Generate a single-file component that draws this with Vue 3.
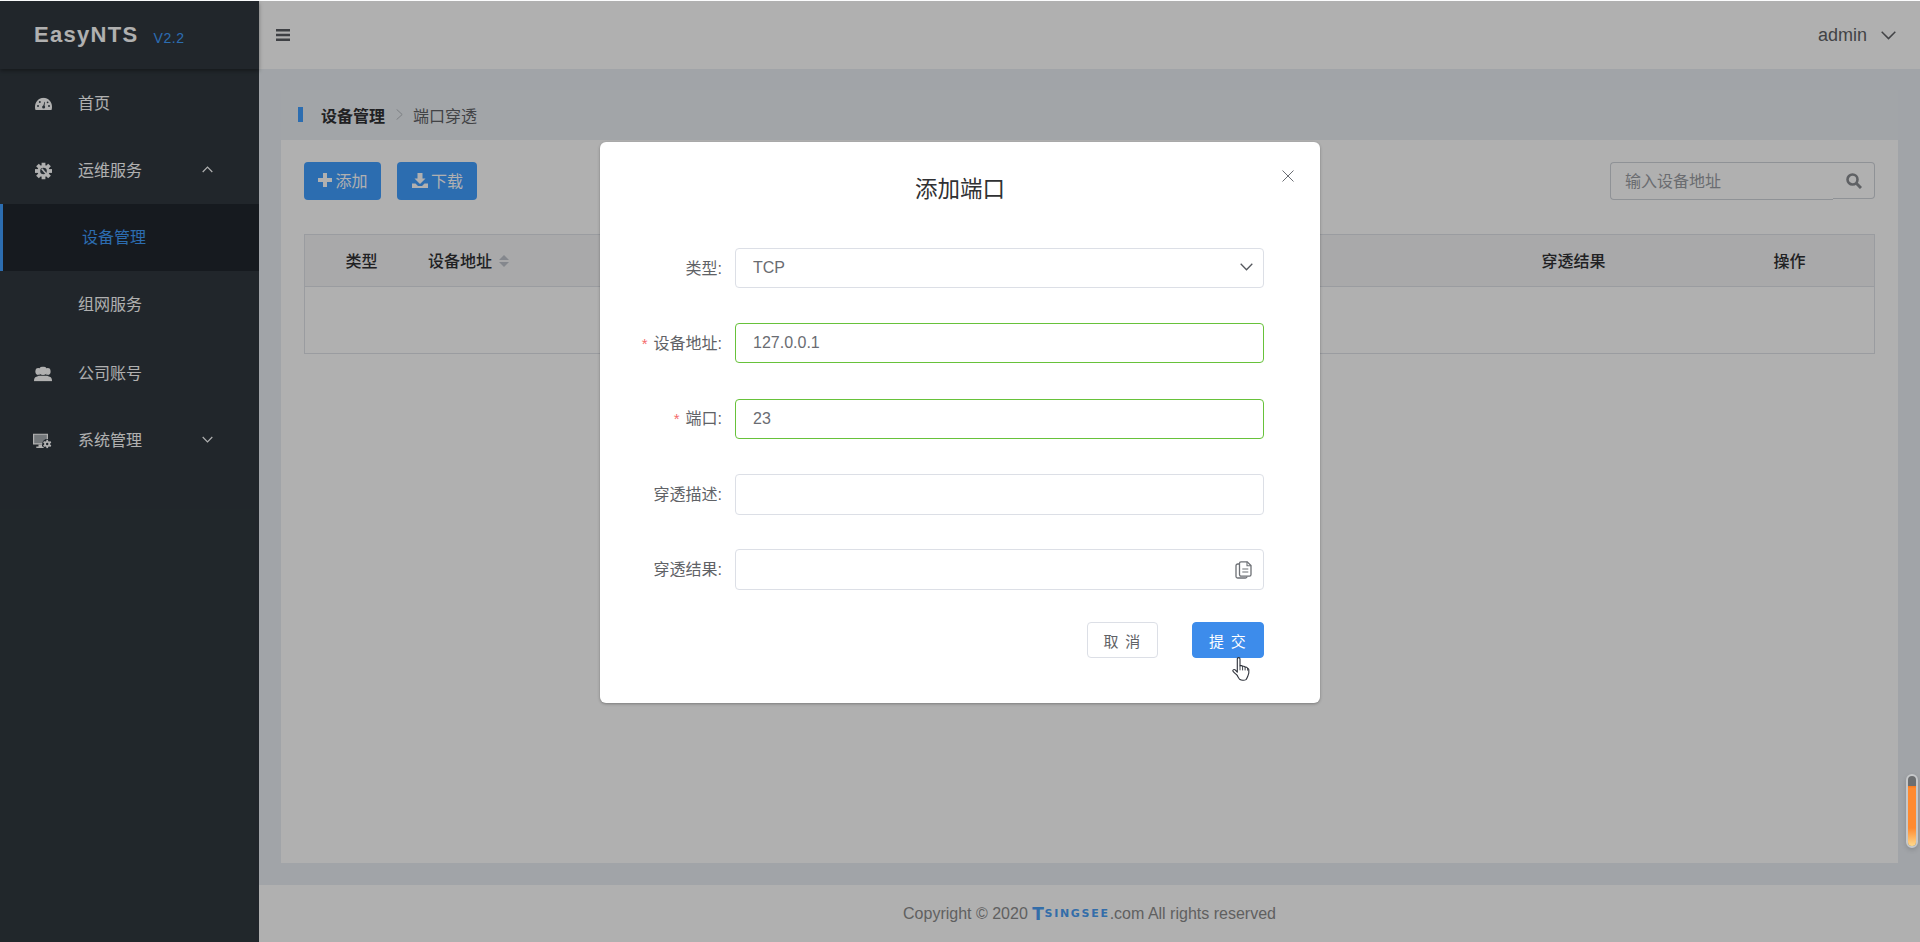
<script setup>
const gearTeeth = [0, 45, 90, 135, 180, 225, 270, 315]
const gearTeethSmall = [0, 60, 120, 180, 240, 300]
</script>

<template>
  <div class="page">
    <div class="topline"></div>
    <div class="shell">
      <aside class="sidebar">
        <div class="brand">
          <span class="brand-name">EasyNTS</span>
          <span class="brand-ver">V2.2</span>
        </div>
        <nav class="menu">
          <div class="menu-row">
            <svg class="menu-icon" viewBox="0 0 17 13" width="17" height="13">
              <path d="M.5 12.6C.1 11.5 0 10.500 0 9.300 0 4.200 3.800.2 8.500.2S17 4.200 17 9.300c0 1.200-.1 2.200-.5 3.300z" fill="#fff"/>
              <path d="M8.100 9 9.500 4.200 10 4.400 9.400 9.500z" fill="#3a444e"/>
              <circle cx="8.600" cy="9.600" r="1.500" fill="#3a444e"/>
              <circle cx="3" cy="8.500" r="1" fill="#3a444e"/>
              <circle cx="4.800" cy="4.600" r="1" fill="#3a444e"/>
              <circle cx="14" cy="8.500" r="1" fill="#3a444e"/>
              <circle cx="12.600" cy="4.800" r=".9" fill="#3a444e"/>
            </svg>
            <span class="menu-label">首页</span>
          </div>
          <div class="menu-row">
            <svg class="menu-icon" viewBox="0 0 17 17" width="17" height="17">
              <g fill="#fff">
                <rect v-for="a in gearTeeth" :key="a" x="6.600" y="0" width="3.800" height="4" :transform="`rotate(${a} 8.500 8.500)`"/>
                <circle cx="8.500" cy="8.500" r="6"/>
              </g>
              <circle cx="8.500" cy="8.500" r="3.300" fill="#3a444e"/>
              <path d="M6.800 6.200 12 12.200" stroke="#fff" stroke-width="1.600"/>
            </svg>
            <span class="menu-label">运维服务</span>
            <svg class="menu-caret" viewBox="0 0 11 7" width="11" height="7"><path d="M.7 6 5.500 1.200 10.300 6" fill="none" stroke="#fff" stroke-width="1.200"/></svg>
          </div>
          <div class="menu-row sub active">
            <span class="menu-label">设备管理</span>
          </div>
          <div class="menu-row sub plain">
            <span class="menu-label">组网服务</span>
          </div>
          <div class="menu-row gapped">
            <svg class="menu-icon wide" viewBox="0 0 18 15" width="18" height="15">
              <ellipse cx="4.300" cy="5" rx="2.900" ry="3.400" fill="#fff"/>
              <ellipse cx="13.700" cy="5" rx="2.900" ry="3.400" fill="#fff"/>
              <path d="M0 14.800c0-2.800.6-3.800 2.400-4.500l2.600-1h8l2.600 1c1.800.7 2.400 1.700 2.400 4.500z" fill="#fff"/>
              <ellipse cx="9" cy="4.300" rx="3.900" ry="4.300" fill="#fff"/>
              <path d="M5.400 7.800c-.5.500-1.100.9-1.800 1.100M12.600 7.800c.5.500 1.100.9 1.800 1.100" fill="none" stroke="#6c747c" stroke-width=".7"/>
            </svg>
            <span class="menu-label">公司账号</span>
          </div>
          <div class="menu-row">
            <svg class="menu-icon wide mon" viewBox="0 0 19 15" width="19" height="15">
              <path d="M0 0h15v11H0z" fill="#fff"/>
              <path d="M1.200 1.200h12.600v8.600H1.200z" fill="#a9aeb3"/>
              <path d="M5.500 11h3.500v2h2.200v1.500H3.300V13h2.200z" fill="#fff"/>
              <circle cx="14.200" cy="10.500" r="5" fill="#2e3740"/>
              <g fill="#fff">
                <rect v-for="a in gearTeethSmall" :key="a" x="13.300" y="6.300" width="1.800" height="2" :transform="`rotate(${a} 14.200 10.500)`"/>
                <circle cx="14.200" cy="10.500" r="3"/>
              </g>
              <circle cx="14.200" cy="10.500" r="1.200" fill="#2e3740"/>
            </svg>
            <span class="menu-label">系统管理</span>
            <svg class="menu-caret" viewBox="0 0 11 7" width="11" height="7"><path d="M.7 1 5.500 5.800 10.300 1" fill="none" stroke="#fff" stroke-width="1.200"/></svg>
          </div>
        </nav>
      </aside>

      <div class="right">
        <header class="topbar">
          <svg class="bars" viewBox="0 0 14 12" width="14" height="12">
            <path d="M0 0h14v2.400H0zM0 4.800h14v2.400H0zM0 9.600h14V12H0z" fill="#5a5e63"/>
          </svg>
          <div class="user">
            <span>admin</span>
            <svg viewBox="0 0 15 9" width="15" height="9"><path d="M.7 .8 7.500 7.600 14.300 .8" fill="none" stroke="#606266" stroke-width="1.500"/></svg>
          </div>
        </header>

        <main class="main">
          <div class="crumbs">
            <i class="crumb-bar"></i>
            <b class="crumb-a">设备管理</b>
            <svg class="crumb-sep" viewBox="0 0 7 11" width="7" height="11"><path d="M.6 .4 6.200 5.500 .6 10.600" fill="none" stroke="#b4b8be" stroke-width="1"/></svg>
            <span class="crumb-b">端口穿透</span>
          </div>
          <section class="panel">
            <div class="toolbar">
              <button class="btn">
                <svg viewBox="0 0 14 14" width="14" height="14"><path d="M5 0h4v5h5v4H9v5H5V9H0V5h5z" fill="#fff"/></svg>
                添加
              </button>
              <button class="btn btn-dl">
                <svg viewBox="0 0 16 15" width="16" height="15"><path d="M5.500 0h5v5.500h3L8 11 2.500 5.500h3zM0 10.500h3.500L6 13h4l2.500-2.500H16V15H0z" fill="#fff"/></svg>
                下载
              </button>
              <div class="search">
                <input class="search-input" placeholder="输入设备地址" />
                <div class="search-append">
                  <svg viewBox="0 0 16 16" width="16" height="16"><circle cx="6.500" cy="6.500" r="5" fill="none" stroke="#8a8d92" stroke-width="2.600"/><path d="M10.300 10.300 15 15" stroke="#8a8d92" stroke-width="3"/></svg>
                </div>
              </div>
            </div>
            <div class="table">
              <div class="thead">
                <div class="th c-type">类型</div>
                <div class="th c-addr">设备地址
                  <span class="sorter"><i class="up"></i><i class="down"></i></span>
                </div>
                <div class="th c-result">穿透结果</div>
                <div class="th c-op">操作</div>
              </div>
              <div class="tbody"></div>
            </div>
          </section>
        </main>

        <footer class="footer">
          Copyright © 2020 <span class="tsingsee"><span class="ts-t">T</span>SINGSEE</span>.com All rights reserved
        </footer>
      </div>
    </div>

    <div class="overlay"></div>

    <div class="dialog">
      <button class="close" aria-label="close">
        <svg viewBox="0 0 12 12" width="12" height="12"><path d="M.5 .5 11.500 11.500M11.500 .5 .5 11.500" stroke="#6a6d73" stroke-width="1"/></svg>
      </button>
      <h2 class="dialog-title">添加端口</h2>
      <div class="form">
        <div class="form-row">
          <label class="form-label">类型:</label>
          <div class="field">
            <input class="field-input" value="TCP" />
            <svg class="select-arrow" viewBox="0 0 13 8" width="13" height="8"><path d="M.7 .8 6.500 6.800 12.300 .8" fill="none" stroke="#55585e" stroke-width="1.300"/></svg>
          </div>
        </div>
        <div class="form-row">
          <label class="form-label"><em>*</em>设备地址:</label>
          <div class="field ok"><input class="field-input" value="127.0.0.1" /></div>
        </div>
        <div class="form-row">
          <label class="form-label"><em>*</em>端口:</label>
          <div class="field ok"><input class="field-input" value="23" /></div>
        </div>
        <div class="form-row">
          <label class="form-label">穿透描述:</label>
          <div class="field tall"><input class="field-input" /></div>
        </div>
        <div class="form-row last">
          <label class="form-label">穿透结果:</label>
          <div class="field tall">
            <input class="field-input" />
            <svg class="copy-icon" viewBox="0 0 17 18" width="17" height="18">
              <path d="M4.500 3H2.800C1.700 3 1 3.700 1 4.800v10.700C1 16.500 1.700 17 2.600 17h7.800c.9 0 1.600-.5 1.600-1.500" fill="none" stroke="#6d7075" stroke-width="1.300"/>
              <path d="M4.500 2.300C4.500 1.400 5.200.8 6 .8h6.200L16 4.600v9c0 .9-.7 1.600-1.500 1.600H6c-.8 0-1.500-.7-1.500-1.600z" fill="#fff" stroke="#6d7075" stroke-width="1.300"/>
              <path d="M12 .8v3.900h4M7.300 8h6M7.300 11h6" fill="none" stroke="#6d7075" stroke-width="1.100"/>
            </svg>
          </div>
        </div>
      </div>
      <div class="actions">
        <button class="act act-cancel">取 消</button>
        <button class="act act-submit">提 交</button>
      </div>
    </div>

    <svg class="hand" viewBox="0 0 19 24" width="19" height="24">
      <path d="M5.300 1.900c0-1.700 2.700-1.700 2.700 0v6.800l1.100-.1c.9 0 1.400.4 1.500.9.400-.4 2.200-.5 2.500.8.600-.4 2.400-.2 2.500 1.200 0 0 1-.1 1.200 1 .3 2.100-.1 5-1 6.700-.5 1.100-1 2.700-1.800 3.400-1.500.9-4.800.7-6 0-1.100-.8-1.900-2.800-3.200-4.700C3.100 16.400 1 14.900.8 13.900c-.2-1.300 1.500-1.700 2.400-1l2.100 2.200z" fill="#fff" stroke="#2b2f38" stroke-width="1.100" stroke-linejoin="round"/>
      <path d="M8 8.700v4.600M10.600 9.500v3.900M13.100 10.400v3M15.600 11.600v2" fill="none" stroke="#2b2f38" stroke-width=".9"/>
    </svg>

    <div class="widget"><div class="widget-fill"></div></div>
  </div>
</template>

<style scoped>
.page {
  position: relative;
  height: 942px;
  overflow: hidden;
  display: flex;
  flex-direction: column;
  font-family: "Liberation Sans", "Noto Sans CJK SC", sans-serif;
  font-size: 16px;
  color: #606266;
  background: #e9eef3;
}
.topline {
  height: 1px;
  flex: none;
  background: #fff;
  position: relative;
  z-index: 5;
  opacity: .8;
}
.shell {
  flex: 1;
  min-height: 0;
  display: flex;
}
.sidebar {
  width: 259px;
  flex: none;
  background: #30383f;
  color: #fff;
}
.brand {
  height: 68px;
  box-sizing: border-box;
  padding-left: 34px;
  display: flex;
  align-items: center;
  background: #30383f;
  box-shadow: 0 2px 4px rgba(0, 0, 0, .35);
  position: relative;
}
.brand-name {
  font-size: 22px;
  font-weight: 700;
  letter-spacing: 1.3px;
}
.brand-ver {
  margin-left: 15px;
  margin-top: 6px;
  font-size: 14px;
  letter-spacing: .6px;
  color: #409eff;
}
.menu {
  padding-top: 1px;
}
.menu-row {
  height: 67px;
  box-sizing: border-box;
  display: flex;
  align-items: center;
  padding-left: 78px;
  padding-bottom: 3px;
  position: relative;
}
.menu-row.gapped {
  margin-top: 2px;
}
.menu-icon {
  position: absolute;
  left: 35px;
  top: 50%;
  transform: translateY(-50%);
}
.menu-icon.wide {
  left: 34px;
}
.menu-icon.mon {
  left: 33px;
}
.menu-caret {
  position: absolute;
  left: 202px;
  top: 29px;
}
.menu-row.sub.active {
  background: #21272d;
  border-left: 3px solid #409eff;
  padding-left: 79px;
  color: #409eff;
}
.right {
  flex: 1;
  min-width: 0;
  display: flex;
  flex-direction: column;
}
.topbar {
  height: 68px;
  flex: none;
  background: #fff;
  box-sizing: border-box;
  padding: 0 24px 0 17px;
  display: flex;
  align-items: center;
  justify-content: space-between;
}
.user {
  display: flex;
  align-items: center;
  gap: 14px;
  font-size: 18px;
  color: #606266;
}
.main {
  flex: 1;
  min-height: 0;
  padding: 21px 22px 22px;
  display: flex;
  flex-direction: column;
}
.crumbs {
  height: 50px;
  flex: none;
  display: flex;
  align-items: center;
  padding-left: 17px;
  padding-bottom: 1px;
  box-sizing: border-box;
  background: #ebeff3;
}
.crumb-bar {
  width: 5px;
  height: 15px;
  background: #409eff;
  margin-right: 18px;
}
.crumb-a {
  font-weight: 700;
  color: #303133;
}
.crumb-sep {
  margin: 0 10px 0 11px;
}
.crumb-b {
  color: #606266;
}
.panel {
  flex: 1;
  min-height: 0;
  background: #fff;
  padding: 22px 23px;
}
.toolbar {
  display: flex;
  align-items: flex-start;
}
.btn {
  height: 38px;
  width: 77px;
  box-sizing: border-box;
  border: 0;
  border-radius: 4px;
  background: #409eff;
  color: #fff;
  font: inherit;
  display: flex;
  align-items: center;
  justify-content: center;
  gap: 3px;
  padding: 0 0 2px 1px;
}
.btn-dl {
  width: 80px;
  margin-left: 16px;
}
.search {
  margin-left: auto;
  display: flex;
  align-items: flex-start;
}
.search-input {
  width: 223px;
  height: 38px;
  box-sizing: border-box;
  border: 1px solid #d0d4da;
  border-right: 0;
  border-radius: 4px 0 0 4px;
  padding: 1px 14px 0;
  outline: 0;
  font: inherit;
  color: #606266;
  background: #fff;
}
.search-input::placeholder {
  color: #9a9da3;
  opacity: 1;
}
.search-append {
  width: 42px;
  height: 37px;
  box-sizing: border-box;
  border: 1px solid #d0d4da;
  border-left: 0;
  border-radius: 0 4px 4px 0;
  display: flex;
  align-items: center;
  justify-content: center;
}
.table {
  margin-top: 34px;
  border: 1px solid #dfe2e8;
}
.thead {
  height: 52px;
  box-sizing: border-box;
  display: flex;
  align-items: center;
  background: #f5f5f7;
  border-bottom: 1px solid #dfe2e8;
  color: #303133;
  font-weight: 500;
  padding-bottom: 2px;
}
.th {
  box-sizing: border-box;
}
.c-type {
  width: 113px;
  text-align: center;
}
.c-addr {
  flex: 1;
  padding-left: 10px;
  display: flex;
  align-items: center;
  gap: 7px;
}
.c-result {
  width: 262px;
  text-align: center;
  padding-right: 1px;
}
.c-op {
  width: 169px;
  text-align: center;
}
.sorter {
  display: inline-flex;
  flex-direction: column;
  gap: 2px;
  padding-top: 2px;
}
.sorter i {
  display: block;
  width: 0;
  height: 0;
  border-left: 5.500px solid transparent;
  border-right: 5.500px solid transparent;
}
.sorter .up {
  border-bottom: 5.500px solid #c0c4cc;
}
.sorter .down {
  border-top: 5.500px solid #c0c4cc;
}
.tbody {
  height: 66px;
}
.footer {
  height: 57px;
  flex: none;
  background: #fff;
  display: flex;
  align-items: center;
  justify-content: center;
  white-space: pre;
  color: #8c8c8c;
}
.tsingsee {
  font-family: "DejaVu Sans", sans-serif;
  font-weight: 700;
  font-size: 11px;
  letter-spacing: 1.7px;
  color: #4a9ef5;
  display: inline-flex;
  align-items: flex-end;
  line-height: 12px;
}
.ts-t {
  font-size: 17px;
  line-height: 12px;
  margin-right: -1px;
}
.overlay {
  position: absolute;
  inset: 1px 0 0;
  background: rgba(0, 0, 0, .31);
}
.dialog {
  position: absolute;
  left: 600px;
  top: 142px;
  width: 720px;
  height: 561px;
  box-sizing: border-box;
  background: #fff;
  border-radius: 6px;
  box-shadow: 0 1px 3px rgba(0, 0, 0, .3);
  padding: 30px 56px 0 0;
}
.close {
  position: absolute;
  right: 26px;
  top: 28px;
  width: 12px;
  height: 12px;
  border: 0;
  padding: 0;
  background: none;
  display: flex;
}
.dialog-title {
  margin: 1px 0 41px 56px;
  font-size: 22.500px;
  line-height: 34px;
  font-weight: 400;
  color: #303133;
  text-align: center;
}
.form {
  display: flex;
  flex-direction: column;
  gap: 35.250px;
}
.form-row {
  display: flex;
  align-items: center;
}
.form-row.last {
  margin-top: -.75px;
}
.form-label {
  width: 122px;
  flex: none;
  margin-right: 13px;
  padding-bottom: 3px;
  text-align: right;
  color: #606266;
  font-size: 16px;
}
.form-label em {
  font-style: normal;
  color: #f56c6c;
  font-size: 15px;
  margin-right: 6px;
}
.field {
  flex: 1;
  height: 40px;
  box-sizing: border-box;
  border: 1px solid #dcdfe6;
  border-radius: 4px;
  display: flex;
  align-items: center;
  padding: 0 16px 0 17px;
}
.field.tall {
  height: 41px;
}
.field.ok {
  border-color: #67c23a;
}
.field-input {
  flex: 1;
  min-width: 0;
  border: 0;
  outline: 0;
  padding: 0;
  background: none;
  font: inherit;
  color: #6a6c72;
}
.select-arrow {
  flex: none;
  margin-right: -6px;
  margin-top: -2px;
}
.copy-icon {
  flex: none;
  margin-right: -5px;
}
.actions {
  margin-top: 32px;
  display: flex;
  justify-content: flex-end;
  gap: 34px;
}
.act {
  height: 36px;
  width: 71px;
  box-sizing: border-box;
  border-radius: 4px;
  border: 1px solid #dcdfe6;
  background: #fff;
  color: #606266;
  font: inherit;
  font-size: 15px;
  letter-spacing: 1.200px;
  padding: 0;
}
.act-submit {
  width: 72px;
  background: #3d8ceb;
  border-color: #3d8ceb;
  color: #fff;
}
.hand {
  position: absolute;
  left: 1232px;
  top: 657px;
}
.widget {
  position: absolute;
  left: 1906px;
  top: 774px;
  width: 12px;
  height: 74px;
  box-sizing: border-box;
  border: 2px solid #c6c8ca;
  border-radius: 6px;
  background: #6c6e70;
  overflow: hidden;
  display: flex;
  align-items: flex-end;
  box-shadow: 0 2px 5px rgba(0, 0, 0, .15);
}
.widget-fill {
  width: 100%;
  height: 60px;
  background: linear-gradient(#f57a20 0, #ff8a30 4%, #ff8a30 70%, #ffd98c 100%);
}
</style>

<style>
html, body {
  margin: 0;
  overflow: hidden;
}
</style>
